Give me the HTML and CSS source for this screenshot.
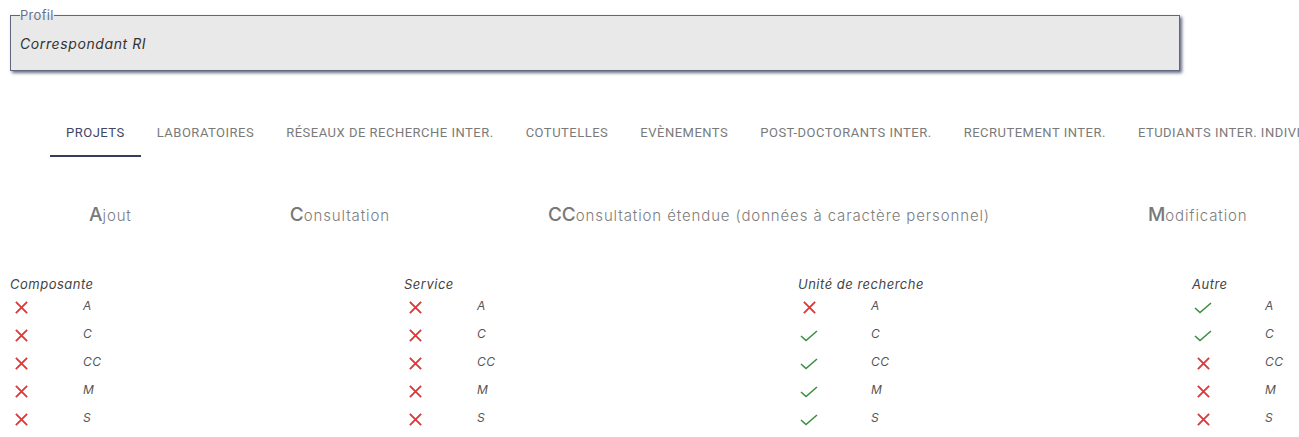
FILE: index.html
```html
<!DOCTYPE html>
<html lang="fr">
<head>
  <meta charset="UTF-8" />
  <meta name="viewport" content="width=device-width, initial-scale=1.0"/>
  <title>Droits - Correspondant RI</title>
  <link rel="stylesheet" href="styles.css">
</head>
<body>

  <!-- Profil -->
  <fieldset class="profil">
    <legend>Profil</legend>
    <div class="profil-value">Correspondant RI</div>
  </fieldset>

  <!-- Onglets -->
  <nav class="tabs">
    <a class="tab active">Projets</a>
    <a class="tab">Laboratoires</a>
    <a class="tab">Réseaux de recherche inter.</a>
    <a class="tab">Cotutelles</a>
    <a class="tab">Evènements</a>
    <a class="tab">Post-doctorants inter.</a>
    <a class="tab">Recrutement inter.</a>
    <a class="tab">Etudiants inter. individuels</a>
  </nav>

  <!-- Légende -->
  <div class="legend">
    <span class="legend-item"><b>A</b>jout</span>
    <span class="legend-item"><b>C</b>onsultation</span>
    <span class="legend-item"><b>CC</b>onsultation étendue (données à caractère personnel)</span>
    <span class="legend-item"><b>M</b>odification</span>
    <span class="legend-item"><b>S</b>uppression</span>
  </div>

  <!-- Droits par périmètre -->
  <div class="rights">
    <div class="scope">
      <div class="scope-title">Composante</div>
      <div class="right"><svg class="no" viewBox="0 0 16 16"><path d="M2 2L14 14M14 2L2 14"/></svg><span>A</span></div>
      <div class="right"><svg class="no" viewBox="0 0 16 16"><path d="M2 2L14 14M14 2L2 14"/></svg><span>C</span></div>
      <div class="right"><svg class="no" viewBox="0 0 16 16"><path d="M2 2L14 14M14 2L2 14"/></svg><span>CC</span></div>
      <div class="right"><svg class="no" viewBox="0 0 16 16"><path d="M2 2L14 14M14 2L2 14"/></svg><span>M</span></div>
      <div class="right"><svg class="no" viewBox="0 0 16 16"><path d="M2 2L14 14M14 2L2 14"/></svg><span>S</span></div>
    </div>
    <div class="scope">
      <div class="scope-title">Service</div>
      <div class="right"><svg class="no" viewBox="0 0 16 16"><path d="M2 2L14 14M14 2L2 14"/></svg><span>A</span></div>
      <div class="right"><svg class="no" viewBox="0 0 16 16"><path d="M2 2L14 14M14 2L2 14"/></svg><span>C</span></div>
      <div class="right"><svg class="no" viewBox="0 0 16 16"><path d="M2 2L14 14M14 2L2 14"/></svg><span>CC</span></div>
      <div class="right"><svg class="no" viewBox="0 0 16 16"><path d="M2 2L14 14M14 2L2 14"/></svg><span>M</span></div>
      <div class="right"><svg class="no" viewBox="0 0 16 16"><path d="M2 2L14 14M14 2L2 14"/></svg><span>S</span></div>
    </div>
    <div class="scope">
      <div class="scope-title">Unité de recherche</div>
      <div class="right"><svg class="no" viewBox="0 0 16 16"><path d="M2 2L14 14M14 2L2 14"/></svg><span>A</span></div>
      <div class="right"><svg class="yes" viewBox="0 0 18 12"><path d="M1 6L6 10.5L17 1"/></svg><span>C</span></div>
      <div class="right"><svg class="yes" viewBox="0 0 18 12"><path d="M1 6L6 10.5L17 1"/></svg><span>CC</span></div>
      <div class="right"><svg class="yes" viewBox="0 0 18 12"><path d="M1 6L6 10.5L17 1"/></svg><span>M</span></div>
      <div class="right"><svg class="yes" viewBox="0 0 18 12"><path d="M1 6L6 10.5L17 1"/></svg><span>S</span></div>
    </div>
    <div class="scope">
      <div class="scope-title">Autre</div>
      <div class="right"><svg class="yes" viewBox="0 0 18 12"><path d="M1 6L6 10.5L17 1"/></svg><span>A</span></div>
      <div class="right"><svg class="yes" viewBox="0 0 18 12"><path d="M1 6L6 10.5L17 1"/></svg><span>C</span></div>
      <div class="right"><svg class="no" viewBox="0 0 16 16"><path d="M2 2L14 14M14 2L2 14"/></svg><span>CC</span></div>
      <div class="right"><svg class="no" viewBox="0 0 16 16"><path d="M2 2L14 14M14 2L2 14"/></svg><span>M</span></div>
      <div class="right"><svg class="no" viewBox="0 0 16 16"><path d="M2 2L14 14M14 2L2 14"/></svg><span>S</span></div>
    </div>
  </div>

</body>
</html>
```

FILE: styles.css
```css
body {
  font-family: Inter, "Liberation Sans", sans-serif;
  margin: 0;
  padding-top: 7px;
  background: #fff;
  color: #444;
  overflow: hidden;
}

/* Profil */
.profil {
  box-sizing: border-box;
  width: 1170px;
  margin: 0 0 0 10px;
  padding: 13px 9px 18px;
  background-color: #e9e9e9;
  border: 1px solid #5f6680;
  box-shadow: 2px 2px 3px rgba(75, 82, 110, 0.85);
}

.profil legend {
  padding: 0;
  font-size: 13px;
  line-height: 16px;
  letter-spacing: 0.3px;
  color: #6a7088;
}

.profil-value {
  font-size: 14px;
  line-height: 16px;
  font-style: italic;
  letter-spacing: 0.6px;
  color: #333;
}

/* Onglets */
.tabs {
  display: flex;
  margin-top: 38px;
  padding-left: 50px;
  white-space: nowrap;
  overflow: hidden;
}

.tab {
  display: flex;
  align-items: center;
  height: 48px;
  box-sizing: border-box;
  padding: 0 16px;
  font-family: Roboto, sans-serif;
  font-size: 13px;
  letter-spacing: 0.5px;
  text-transform: uppercase;
  color: #7a7a7a;
  border-bottom: 2px solid transparent;
  cursor: pointer;
}

.tab.active {
  color: #3f4668;
  border-bottom-color: #363d5c;
}

/* Légende */
.legend {
  display: flex;
  gap: 158px;
  margin-top: 46px;
  padding-left: 89px;
  white-space: nowrap;
  overflow: hidden;
  font-size: 15px;
  font-weight: 300;
  letter-spacing: 0.88px;
  line-height: 24px;
  color: #7d7d7d;
}

.legend-item b {
  font-size: 19px;
  font-weight: 500;
  letter-spacing: 0;
  color: #787878;
}

/* Droits */
.rights {
  display: grid;
  grid-template-columns: repeat(4, 394px);
  margin-top: 48px;
  padding-left: 10px;
}

.scope-title {
  font-size: 13px;
  line-height: 16px;
  font-style: italic;
  letter-spacing: 0.5px;
  color: #444;
}

.right {
  display: grid;
  grid-template-columns: 73px auto;
  align-items: center;
  height: 28px;
}

.right span {
  font-size: 12px;
  font-style: italic;
  letter-spacing: 0.4px;
  color: #555;
  margin-top: -2px;
}

.right svg {
  fill: none;
  margin-top: 3px;
}

.right .no {
  width: 15px;
  height: 15px;
  margin-left: 4px;
  stroke: #dc3a3a;
  stroke-width: 2;
}

.right .yes {
  width: 18px;
  height: 12px;
  margin-left: 2px;
  stroke: #3c8e40;
  stroke-width: 1.6;
}
```
